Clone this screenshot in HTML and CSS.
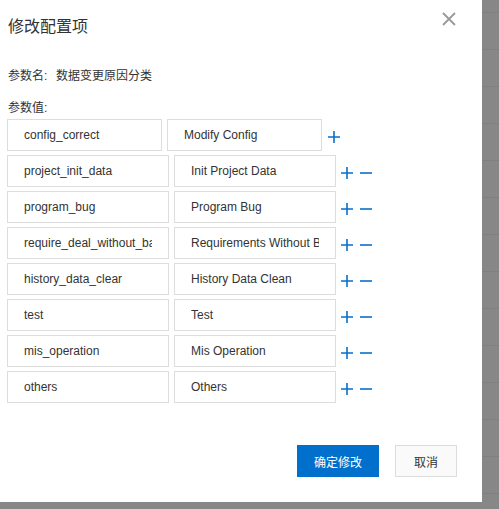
FILE: index.html
```html
<!DOCTYPE html>
<html lang="zh-CN">
<head>
<meta charset="utf-8">
<title>修改配置项</title>
<link rel="stylesheet" href="styles.css">
</head>
<body>
<div class="dialog">
  <div class="dialog-header">
    <h2 class="dialog-title">修改配置项</h2>
    <button class="close-btn" type="button" aria-label="关闭">
      <svg width="14" height="14" viewBox="0 0 14 14"><path d="M1 1L13 13M13 1L1 13" stroke="#999" stroke-width="1.8" fill="none"/></svg>
    </button>
  </div>
  <div class="meta"><span class="meta-label">参数名:</span><span class="meta-value">数据变更原因分类</span></div>
  <div class="values-label">参数值:</div>
  <div class="rows">
    <div class="row row-first">
      <input class="field" type="text" value="config_correct" readonly>
      <input class="field" type="text" value="Modify Config" readonly>
      <div class="ops">
        <span class="op"><svg width="12" height="12" viewBox="0 0 12 12"><path d="M6 0V12M0 6H12" stroke="#0a6fcc" stroke-width="1.6" fill="none"/></svg></span>
      </div>
    </div>
    <div class="row">
      <input class="field" type="text" value="project_init_data" readonly>
      <input class="field" type="text" value="Init Project Data" readonly>
      <div class="ops">
        <span class="op"><svg width="12" height="12" viewBox="0 0 12 12"><path d="M6 0V12M0 6H12" stroke="#0a6fcc" stroke-width="1.6" fill="none"/></svg></span>
        <span class="op"><svg width="12" height="12" viewBox="0 0 12 12"><path d="M0 6H12" stroke="#0a6fcc" stroke-width="1.6" fill="none"/></svg></span>
      </div>
    </div>
    <div class="row">
      <input class="field" type="text" value="program_bug" readonly>
      <input class="field" type="text" value="Program Bug" readonly>
      <div class="ops">
        <span class="op"><svg width="12" height="12" viewBox="0 0 12 12"><path d="M6 0V12M0 6H12" stroke="#0a6fcc" stroke-width="1.6" fill="none"/></svg></span>
        <span class="op"><svg width="12" height="12" viewBox="0 0 12 12"><path d="M0 6H12" stroke="#0a6fcc" stroke-width="1.6" fill="none"/></svg></span>
      </div>
    </div>
    <div class="row">
      <input class="field" type="text" value="require_deal_without_backup" readonly>
      <input class="field" type="text" value="Requirements Without Backup" readonly>
      <div class="ops">
        <span class="op"><svg width="12" height="12" viewBox="0 0 12 12"><path d="M6 0V12M0 6H12" stroke="#0a6fcc" stroke-width="1.6" fill="none"/></svg></span>
        <span class="op"><svg width="12" height="12" viewBox="0 0 12 12"><path d="M0 6H12" stroke="#0a6fcc" stroke-width="1.6" fill="none"/></svg></span>
      </div>
    </div>
    <div class="row">
      <input class="field" type="text" value="history_data_clear" readonly>
      <input class="field" type="text" value="History Data Clean" readonly>
      <div class="ops">
        <span class="op"><svg width="12" height="12" viewBox="0 0 12 12"><path d="M6 0V12M0 6H12" stroke="#0a6fcc" stroke-width="1.6" fill="none"/></svg></span>
        <span class="op"><svg width="12" height="12" viewBox="0 0 12 12"><path d="M0 6H12" stroke="#0a6fcc" stroke-width="1.6" fill="none"/></svg></span>
      </div>
    </div>
    <div class="row">
      <input class="field" type="text" value="test" readonly>
      <input class="field" type="text" value="Test" readonly>
      <div class="ops">
        <span class="op"><svg width="12" height="12" viewBox="0 0 12 12"><path d="M6 0V12M0 6H12" stroke="#0a6fcc" stroke-width="1.6" fill="none"/></svg></span>
        <span class="op"><svg width="12" height="12" viewBox="0 0 12 12"><path d="M0 6H12" stroke="#0a6fcc" stroke-width="1.6" fill="none"/></svg></span>
      </div>
    </div>
    <div class="row">
      <input class="field" type="text" value="mis_operation" readonly>
      <input class="field" type="text" value="Mis Operation" readonly>
      <div class="ops">
        <span class="op"><svg width="12" height="12" viewBox="0 0 12 12"><path d="M6 0V12M0 6H12" stroke="#0a6fcc" stroke-width="1.6" fill="none"/></svg></span>
        <span class="op"><svg width="12" height="12" viewBox="0 0 12 12"><path d="M0 6H12" stroke="#0a6fcc" stroke-width="1.6" fill="none"/></svg></span>
      </div>
    </div>
    <div class="row">
      <input class="field" type="text" value="others" readonly>
      <input class="field" type="text" value="Others" readonly>
      <div class="ops">
        <span class="op"><svg width="12" height="12" viewBox="0 0 12 12"><path d="M6 0V12M0 6H12" stroke="#0a6fcc" stroke-width="1.6" fill="none"/></svg></span>
        <span class="op"><svg width="12" height="12" viewBox="0 0 12 12"><path d="M0 6H12" stroke="#0a6fcc" stroke-width="1.6" fill="none"/></svg></span>
      </div>
    </div>
  </div>
  <div class="dialog-footer">
    <button class="btn btn-primary" type="button">确定修改</button>
    <button class="btn btn-default" type="button">取消</button>
  </div>
</div>
</body>
</html>
```

FILE: styles.css
```css
html, body {
  margin: 0;
  padding: 0;
}

body {
  width: 499px;
  height: 509px;
  overflow: hidden;
  background: repeating-linear-gradient(to bottom, #878787 0, #878787 12px, #7f7f7f 12px, #7f7f7f 13px, #878787 13px, #878787 37px);
  font-family: "Liberation Sans", Arial, "Noto Sans CJK SC", sans-serif;
  color: #333;
}

.dialog {
  width: 482px;
  height: 502px;
  box-sizing: border-box;
  background: #fff;
  padding: 15px 0 0 7px;
  display: flex;
  flex-direction: column;
}

.dialog-header {
  display: flex;
  justify-content: space-between;
  align-items: flex-start;
  margin-right: 26px;
}

.dialog-title {
  margin: 0 0 0 1px;
  font-size: 16px;
  line-height: 24px;
  font-weight: normal;
  color: #333;
}

.close-btn {
  margin-top: -3px;
  padding: 0;
  border: 0;
  background: none;
  width: 14px;
  height: 14px;
  display: flex;
}

.meta {
  margin-top: 27px;
  padding-left: 1px;
  font-size: 12px;
  line-height: 20px;
}

.meta-label {
  display: inline-block;
  width: 48px;
}

.values-label {
  margin-top: 12px;
  margin-bottom: 1px;
  padding-left: 1px;
  font-size: 12px;
  line-height: 20px;
}

.rows {
  display: flex;
  flex-direction: column;
  gap: 4px;
}

.row {
  display: flex;
  align-items: center;
  gap: 5px;
}

.field {
  box-sizing: border-box;
  width: 162px;
  height: 32px;
  margin: 0;
  padding: 0 16px;
  border: 1px solid #ddd;
  border-radius: 0;
  background: #fff;
  font-family: "Liberation Sans", Arial, sans-serif;
  font-size: 12px;
  color: #333;
  outline: none;
}

.row-first .field {
  width: 155px;
}

.row-first .ops {
  margin-left: 1px;
}

.ops {
  display: flex;
  align-items: center;
  gap: 7px;
  margin-top: 4px;
}

.op {
  display: flex;
  width: 12px;
  height: 12px;
}

.dialog-footer {
  display: flex;
  justify-content: flex-end;
  gap: 16px;
  margin-top: 42px;
  margin-right: 25px;
}

.btn {
  box-sizing: border-box;
  height: 32px;
  margin: 0;
  padding: 0;
  border-radius: 0;
  font-family: "Noto Sans CJK SC", sans-serif;
  font-size: 12px;
  cursor: pointer;
}

.btn-primary {
  width: 82px;
  border: 1px solid #0070cc;
  background: #0070cc;
  color: #fff;
}

.btn-default {
  width: 62px;
  border: 1px solid #ddd;
  background: #fafafa;
  color: #333;
}
```
